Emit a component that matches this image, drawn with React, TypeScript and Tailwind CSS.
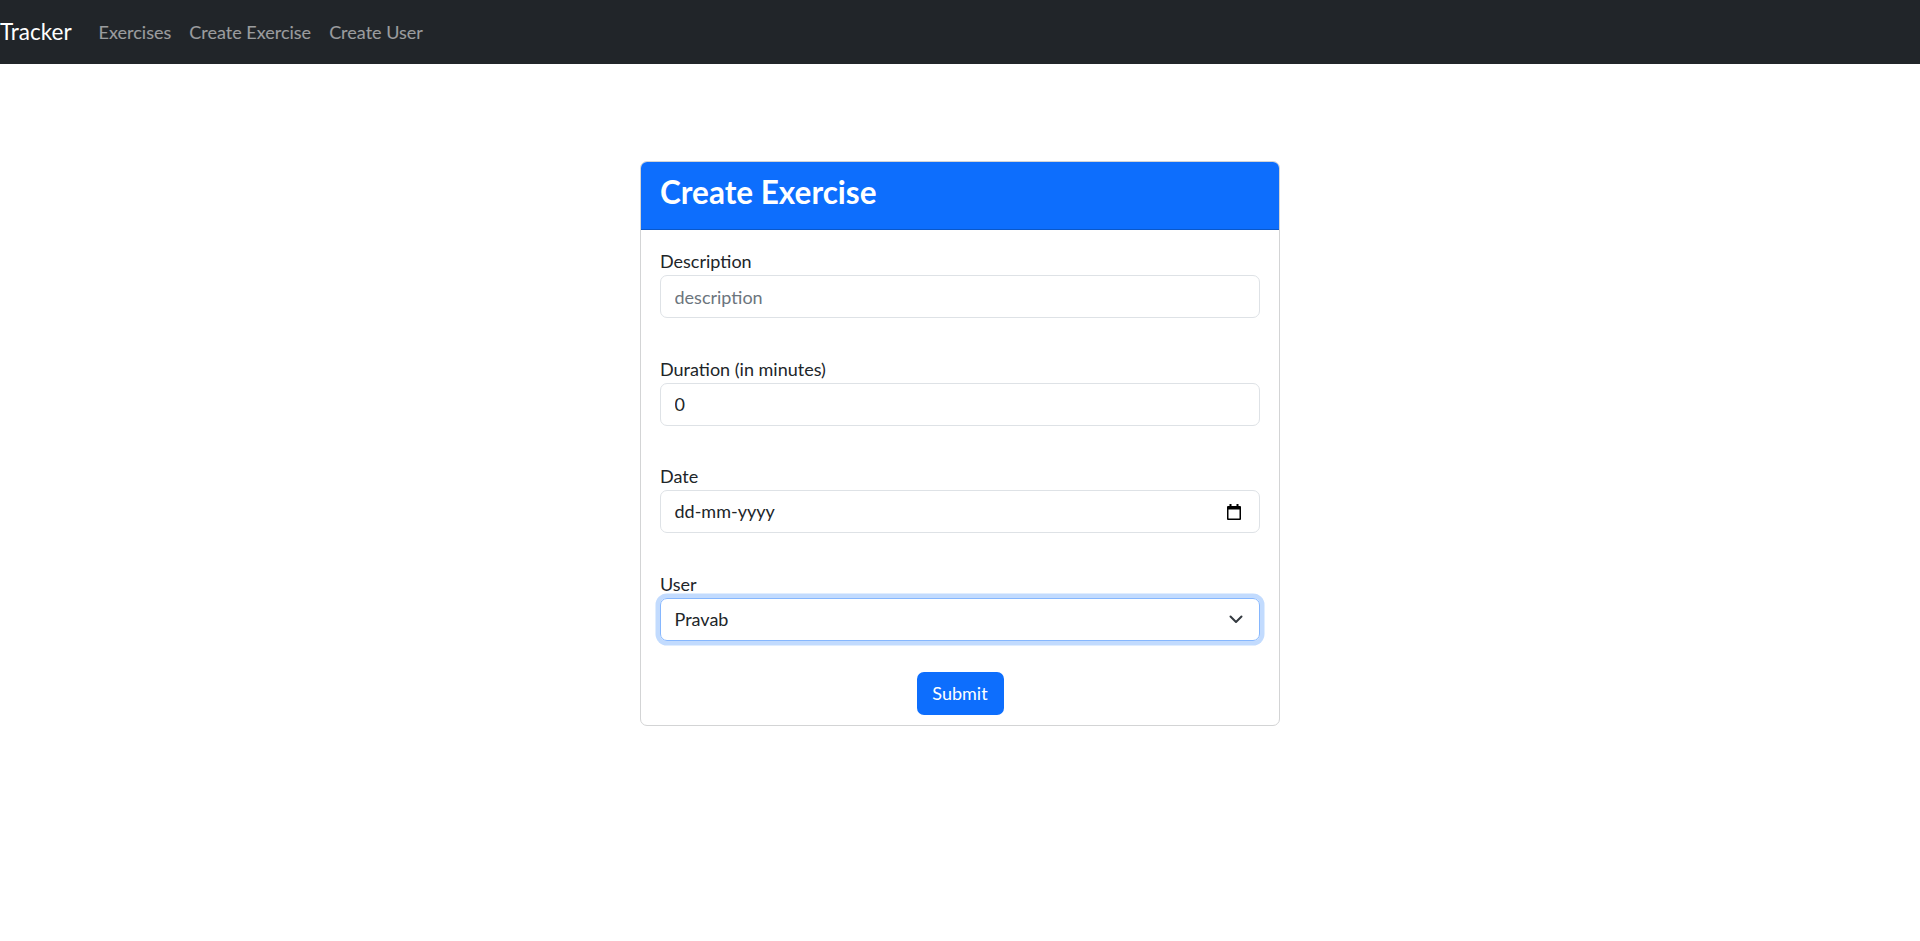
export default function App() {
  const navLinks = ['Exercises', 'Create Exercise', 'Create User']

  return (
    <div className="min-h-screen bg-white font-['Lato','Liberation_Sans',sans-serif] text-[18px] text-[#212529]">
      <nav className="flex h-[64px] items-center bg-[#212529]">
        <span className="mr-[18px] text-[22.5px] leading-[34px] text-white">Tracker</span>
        {navLinks.map((link) => (
          <a key={link} className="px-[9px] text-[18px] leading-[27px] text-white/55">
            {link}
          </a>
        ))}
      </nav>

      <div className="pt-[97px]">
        <div className="mx-auto w-[640px] overflow-hidden rounded-[7px] border border-[#d3d4d5]">
          <div className="h-[68px] border-b border-black/20 bg-[#0d6efd] px-[19px] pt-[11px]">
            <h3 className="text-[31.5px] font-bold leading-[38px] text-white">Create Exercise</h3>
          </div>

          <div className="flex flex-col px-[19px] pt-[18px] pb-[10px]">
            <div className="mb-[37.5px]">
              <label className="block leading-[27px]">Description</label>
              <input
                placeholder="description"
                className="h-[43px] w-full rounded-[7px] border border-[#dee2e6] px-[13.5px] text-[18px] outline-none placeholder:text-[#6c757d]"
              />
            </div>

            <div className="mb-[37.5px]">
              <label className="block leading-[27px]">Duration (in minutes)</label>
              <input
                defaultValue="0"
                className="h-[43px] w-full rounded-[7px] border border-[#dee2e6] px-[13.5px] text-[18px] outline-none"
              />
            </div>

            <div className="mb-[37.5px]">
              <label className="block leading-[27px]">Date</label>
              <div className="flex h-[43px] w-full items-center justify-between rounded-[7px] border border-[#dee2e6] pr-[18px] pl-[13.5px]">
                <span>dd-mm-yyyy</span>
                <svg width="14" height="16" viewBox="0 0 14 16" className="text-black">
                  <rect x="0" y="2" width="14" height="14" rx="1" fill="currentColor" />
                  <rect x="1.5" y="5.5" width="11" height="9" fill="white" />
                  <rect x="2.5" y="0" width="2" height="3" fill="currentColor" />
                  <rect x="9.5" y="0" width="2" height="3" fill="currentColor" />
                </svg>
              </div>
            </div>

            <div className="mb-[31px]">
              <label className="block leading-[27px]">User</label>
              <div className="flex h-[43px] w-full items-center justify-between rounded-[7px] border border-[#86b7fe] pr-[16px] pl-[13.5px] shadow-[0_0_0_4.5px_rgba(13,110,253,0.25)]">
                <span>Pravab</span>
                <svg width="14" height="9" viewBox="0 0 14 9" fill="none">
                  <path d="M1.5 1.5 7 7l5.5-5.5" stroke="#343a40" strokeWidth="2" strokeLinecap="round" strokeLinejoin="round" />
                </svg>
              </div>
            </div>

            <div className="flex justify-center">
              <button className="h-[43px] w-[87px] rounded-[7px] bg-[#0d6efd] text-[18px] text-white">
                Submit
              </button>
            </div>
          </div>
        </div>
      </div>
    </div>
  )
}
